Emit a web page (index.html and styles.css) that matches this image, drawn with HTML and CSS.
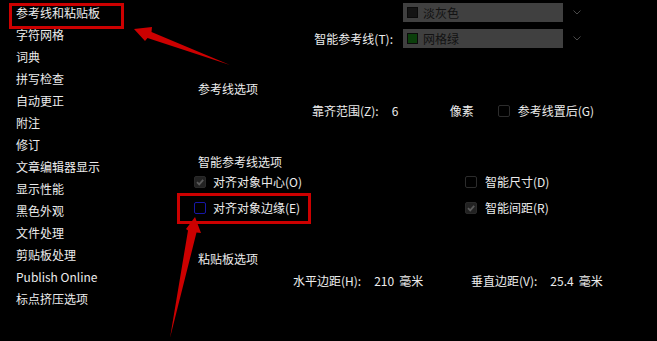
FILE: index.html
```html
<!DOCTYPE html>
<html>
<head>
<meta charset="utf-8">
<link rel="stylesheet" href="styles.css">
</head>
<body>
<div class="page">
  <ul class="sidebar">
    <li>参考线和粘贴板</li>
    <li>字符网格</li>
    <li>词典</li>
    <li>拼写检查</li>
    <li>自动更正</li>
    <li>附注</li>
    <li>修订</li>
    <li>文章编辑器显示</li>
    <li>显示性能</li>
    <li>黑色外观</li>
    <li>文件处理</li>
    <li>剪贴板处理</li>
    <li>Publish Online</li>
    <li>标点挤压选项</li>
  </ul>
  <div class="main">
    <div class="colors">
      <span class="lbl"></span>
      <div class="select"><span class="swatch gray"></span><span class="stext">淡灰色</span></div>
      <svg class="chev" width="8" height="5" viewBox="0 0 8 5"><polyline points="0.5,0.5 4,4 7.5,0.5" fill="none" stroke="#4a4a4a" stroke-width="1"/></svg>
      <span class="lbl">智能参考线(T):</span>
      <div class="select"><span class="swatch green"></span><span class="stext">网格绿</span></div>
      <svg class="chev" width="8" height="5" viewBox="0 0 8 5"><polyline points="0.5,0.5 4,4 7.5,0.5" fill="none" stroke="#4a4a4a" stroke-width="1"/></svg>
    </div>

    <div class="heading h-guides">参考线选项</div>
    <div class="snaprow">
      <span class="t">靠齐范围(Z):</span>
      <span class="num">6</span>
      <span class="t">像素</span>
      <span class="cb off gap24"></span>
      <span class="t">参考线置后(G)</span>
    </div>

    <div class="heading h-smart">智能参考线选项</div>
    <div class="checks">
      <label class="chk"><span class="cb on"><svg width="10" height="10" viewBox="0 0 10 10"><polyline points="2,5.2 4.2,7.4 8.2,2.8" fill="none" stroke="#5a5a5a" stroke-width="1.8"/></svg></span>对齐对象中心(O)</label>
      <label class="chk"><span class="cb off"></span>智能尺寸(D)</label>
      <label class="chk"><span class="cb focus"></span>对齐对象边缘(E)</label>
      <label class="chk"><span class="cb on"><svg width="10" height="10" viewBox="0 0 10 10"><polyline points="2,5.2 4.2,7.4 8.2,2.8" fill="none" stroke="#5a5a5a" stroke-width="1.8"/></svg></span>智能间距(R)</label>
    </div>

    <div class="heading h-paste">粘贴板选项</div>
    <div class="marginrow">
      <div class="grp g1"><span class="t">水平边距(H):</span><span class="val">210</span><span class="t">毫米</span></div>
      <div class="grp"><span class="t">垂直边距(V):</span><span class="val">25.4</span><span class="t">毫米</span></div>
    </div>
  </div>
</div>

<div class="mark box1"></div>
<div class="mark box2"></div>
<svg class="arrows" width="657" height="341" viewBox="0 0 657 341">
  <polygon points="134,29 152,27 151.5,32 230,65 147.5,38 145,41" fill="#cc0000"/>
  <polygon points="195,217 201,233 196.5,232.5 170,338 188,230.5 186,229" fill="#cc0000"/>
</svg>
</body>
</html>
```

FILE: styles.css
```css
html, body {
  margin: 0;
  padding: 0;
  background: #000;
}
body {
  width: 657px;
  height: 341px;
  overflow: hidden;
  position: relative;
  font-family: "Noto Sans CJK SC", "Noto Sans", sans-serif;
  font-size: 12px;
  color: #ececec;
}
.page {
  display: flex;
}
.sidebar {
  list-style: none;
  margin: 0;
  padding: 2px 0 0 16px;
  width: 164px;
  flex: none;
}
.sidebar li {
  height: 22px;
  line-height: 22px;
  white-space: nowrap;
}
.main {
  flex: 1;
  padding-left: 14px;
  padding-top: 3px;
}
.colors {
  display: grid;
  grid-template-columns: 199px 160px 8px;
  column-gap: 10px;
  row-gap: 7px;
  align-items: center;
}
.lbl {
  text-align: right;
  line-height: 16px;
  white-space: nowrap;
}
.select {
  height: 19px;
  background: #404040;
  display: flex;
  align-items: center;
  padding-left: 4px;
  box-sizing: border-box;
}
.swatch {
  width: 11px;
  height: 11px;
  box-sizing: border-box;
  border: 1px solid #0a0a0a;
  margin-right: 5px;
}
.swatch.gray { background: #141414; }
.swatch.green { background: #0b3f0b; }
.stext {
  color: #121212;
  line-height: 16px;
}
.chev {
  display: block;
}
.heading {
  padding-left: 4px;
  line-height: 16px;
  height: 16px;
}
.h-guides { margin-top: 33px; }
.h-smart { margin-top: 35px; }
.h-paste { margin-top: 35px; }
.snaprow {
  margin-top: 6px;
  padding-left: 118px;
  display: flex;
  align-items: center;
  height: 16px;
  line-height: 16px;
  white-space: nowrap;
}
.num {
  margin-left: 13px;
  width: 58px;
}
.cb {
  width: 12px;
  height: 12px;
  box-sizing: border-box;
  border-radius: 2px;
  flex: none;
  display: inline-flex;
  align-items: center;
  justify-content: center;
}
.cb.off { border: 1px solid #2c2c2c; }
.cb.on { background: #222; border: 1px solid #2a2a2a; }
.cb.focus { border: 1px solid #1717a6; }
.gap24 { margin-left: 24px; margin-right: 8px; }
.checks {
  margin-top: 4px;
  display: grid;
  grid-template-columns: 271px auto;
  row-gap: 10px;
}
.chk {
  display: flex;
  align-items: center;
  gap: 7px;
  height: 16px;
  line-height: 16px;
  white-space: nowrap;
}
.chk:nth-child(even) { gap: 8px; }
.marginrow {
  margin-top: 6px;
  padding-left: 99px;
  display: flex;
  height: 16px;
  line-height: 16px;
  white-space: nowrap;
}
.grp { display: flex; }
.g1 { width: 178px; }
.val { margin-left: 13px; margin-right: 5px; }
.mark {
  position: absolute;
  border: 3px solid #cc0000;
  box-sizing: border-box;
}
.box1 { left: 9px; top: 3px; width: 115px; height: 26px; }
.box2 { left: 177px; top: 193px; width: 134px; height: 31px; }
.arrows {
  position: absolute;
  left: 0;
  top: 0;
  pointer-events: none;
}
```
